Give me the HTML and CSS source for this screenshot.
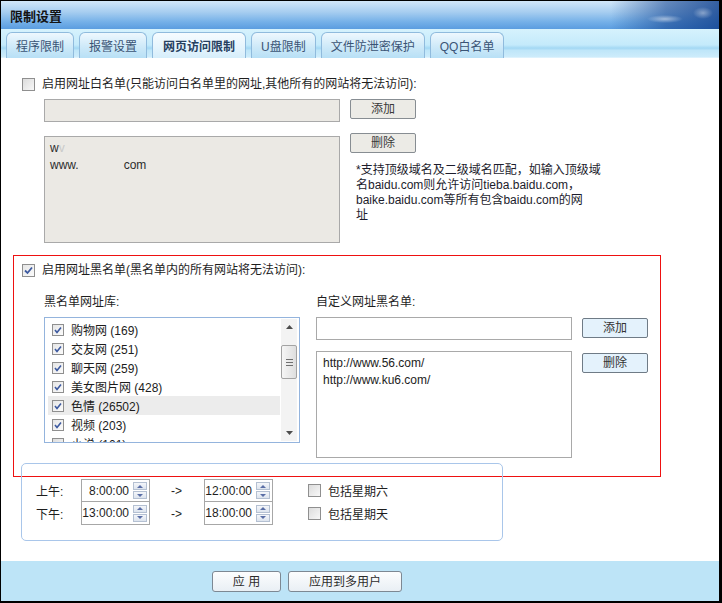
FILE: index.html
```html
<!DOCTYPE html>
<html lang="zh-CN">
<head>
  <meta charset="UTF-8">
  <title>限制设置</title>
  <link rel="stylesheet" href="styles.css">
</head>
<body>
  <div class="window">
    <div class="titlebar">
      <span class="title">限制设置</span>
    </div>

    <div class="tabstrip">
      <div class="tab">程序限制</div>
      <div class="tab">报警设置</div>
      <div class="tab active">网页访问限制</div>
      <div class="tab">U盘限制</div>
      <div class="tab">文件防泄密保护</div>
      <div class="tab">QQ白名单</div>
    </div>

    <div class="content">
      <div class="check-row white-head">
        <span class="cb"></span>
        <span>启用网址白名单(只能访问白名单里的网址,其他所有的网站将无法访问):</span>
      </div>

      <div class="whitelist">
        <div class="wl-left">
          <div class="field disabled"></div>
          <div class="area wl-area disabled">
            <div class="blur-line">w<span class="faded">v</span></div>
            <div>www.<span class="gap"></span>com</div>
          </div>
        </div>
        <div class="wl-right">
          <button class="btn gray">添加</button>
          <button class="btn gray del">删除</button>
          <p class="note">*支持顶级域名及二级域名匹配，如输入顶级域<br>名baidu.com则允许访问tieba.baidu.com，<br>baike.baidu.com等所有包含baidu.com的网<br>址</p>
        </div>
      </div>

      <div class="blackbox">
        <div class="check-row">
          <span class="cb on"><svg width="11" height="11" viewBox="0 0 11 11"><path d="M2 5.5 L4.5 8 L9 2.5" fill="none" stroke="#3d5aa0" stroke-width="1.8"/></svg></span>
          <span>启用网址黑名单(黑名单内的所有网站将无法访问):</span>
        </div>

        <div class="bl-cols">
          <div class="bl-left">
            <div class="sub-label">黑名单网址库:</div>
            <div class="listbox">
              <div class="list-items">
                <div class="item"><span class="cb sm on"><svg width="10" height="10" viewBox="0 0 10 10"><path d="M2 5 L4 7.5 L8 2.5" fill="none" stroke="#3d5aa0" stroke-width="1.6"/></svg></span>购物网 (169)</div>
                <div class="item"><span class="cb sm on"><svg width="10" height="10" viewBox="0 0 10 10"><path d="M2 5 L4 7.5 L8 2.5" fill="none" stroke="#3d5aa0" stroke-width="1.6"/></svg></span>交友网 (251)</div>
                <div class="item"><span class="cb sm on"><svg width="10" height="10" viewBox="0 0 10 10"><path d="M2 5 L4 7.5 L8 2.5" fill="none" stroke="#3d5aa0" stroke-width="1.6"/></svg></span>聊天网 (259)</div>
                <div class="item"><span class="cb sm on"><svg width="10" height="10" viewBox="0 0 10 10"><path d="M2 5 L4 7.5 L8 2.5" fill="none" stroke="#3d5aa0" stroke-width="1.6"/></svg></span>美女图片网 (428)</div>
                <div class="item hover"><span class="cb sm on"><svg width="10" height="10" viewBox="0 0 10 10"><path d="M2 5 L4 7.5 L8 2.5" fill="none" stroke="#3d5aa0" stroke-width="1.6"/></svg></span>色情 (26502)</div>
                <div class="item"><span class="cb sm on"><svg width="10" height="10" viewBox="0 0 10 10"><path d="M2 5 L4 7.5 L8 2.5" fill="none" stroke="#3d5aa0" stroke-width="1.6"/></svg></span>视频 (203)</div>
                <div class="item"><span class="cb sm"></span>小说 (101)</div>
              </div>
              <div class="scrollbar">
                <div class="sb-arrow"><svg width="7" height="4" viewBox="0 0 7 4"><path d="M0 4 L3.5 0 L7 4 Z" fill="#4d4d4d"/></svg></div>
                <div class="sb-track">
                  <div class="sb-thumb"><span></span><span></span><span></span></div>
                </div>
                <div class="sb-arrow"><svg width="7" height="4" viewBox="0 0 7 4"><path d="M0 0 L3.5 4 L7 0 Z" fill="#4d4d4d"/></svg></div>
              </div>
            </div>
          </div>

          <div class="bl-right">
            <div class="sub-label">自定义网址黑名单:</div>
            <div class="bl-row">
              <div class="field"></div>
              <button class="btn blue">添加</button>
            </div>
            <div class="bl-row second">
              <div class="area bl-area">
                <div>http://www.56.com/</div>
                <div>http://www.ku6.com/</div>
              </div>
              <button class="btn blue">删除</button>
            </div>
          </div>
        </div>
      </div>

      <div class="timebox">
        <div class="time-row">
          <span class="t-label">上午:</span>
          <div class="spin"><span class="val">8:00:00</span><span class="spin-btns"><i class="up"></i><i class="down"></i></span></div>
          <span class="arrow">-&gt;</span>
          <div class="spin"><span class="val">12:00:00</span><span class="spin-btns"><i class="up"></i><i class="down"></i></span></div>
          <span class="cb day"></span><span>包括星期六</span>
        </div>
        <div class="time-row">
          <span class="t-label">下午:</span>
          <div class="spin"><span class="val">13:00:00</span><span class="spin-btns"><i class="up"></i><i class="down"></i></span></div>
          <span class="arrow">-&gt;</span>
          <div class="spin"><span class="val">18:00:00</span><span class="spin-btns"><i class="up"></i><i class="down"></i></span></div>
          <span class="cb day"></span><span>包括星期天</span>
        </div>
      </div>
    </div>

    <div class="footer">
      <button class="btn foot apply">应 用</button>
      <button class="btn foot multi">应用到多用户</button>
    </div>
  </div>
</body>
</html>
```

FILE: styles.css
```css
html, body {
  margin: 0;
  padding: 0;
}

body {
  width: 722px;
  height: 603px;
  background: #000;
  font-family: "Liberation Sans", "Noto Sans CJK SC", sans-serif;
  font-size: 12px;
  color: #1e1e1e;
  overflow: hidden;
}

.window {
  margin: 1px 3px 0 1px;
  width: 718px;
  height: 600px;
  background: #fff;
  display: flex;
  flex-direction: column;
}

/* title bar */
.titlebar {
  height: 28px;
  flex: none;
  display: flex;
  align-items: center;
  padding-left: 9px;
  background:
    radial-gradient(ellipse 18px 4px at 664px 18px, rgba(255,255,255,0.5), rgba(255,255,255,0)),
    radial-gradient(ellipse 10px 6px at 702px 12px, rgba(255,255,255,0.4), rgba(255,255,255,0)),
    linear-gradient(to right, rgba(14,62,140,0) 610px, rgba(14,62,140,0.55) 665px, rgba(14,62,140,0.8) 718px),
    linear-gradient(#d2e7f9, #a6cdf0 40%, #74b0e8 75%, #5b9de0 100%);
}

.title {
  font-weight: bold;
  font-size: 13px;
  color: #141414;
}

/* tabs */
.tabstrip {
  height: 29px;
  flex: none;
  display: flex;
  align-items: flex-end;
  gap: 5px;
  padding-left: 5px;
  box-sizing: border-box;
  background: linear-gradient(#d6f2fd 0, #c4eafb 55%, #a3d8f4 66%, #bfe6f9 74%, #cdecfb 96%, #e9f7fe 100%);
}

.tab {
  height: 26px;
  box-sizing: border-box;
  padding: 0 9px;
  display: flex;
  align-items: center;
  border: 1px solid #90bbdd;
  border-bottom: none;
  border-radius: 6px 6px 0 0;
  background: linear-gradient(#eef8fe, #cbe8f8 60%, #b8e0f6);
  color: #3a5475;
  font-size: 12px;
}

.tab.active {
  background: linear-gradient(#f6fcff, #e4f4fd 60%, #d6eefb);
  font-weight: bold;
  color: #26405f;
  padding: 0 10px;
}

/* content area */
.content {
  height: 503px;
  flex: none;
  box-sizing: border-box;
  padding-left: 21px;
}

.check-row {
  display: flex;
  align-items: center;
  gap: 7px;
  height: 16px;
  line-height: 16px;
}

.white-head {
  margin-top: 18px;
}

.cb {
  width: 13px;
  height: 13px;
  box-sizing: border-box;
  border: 1px solid #8f8f8f;
  background: linear-gradient(135deg, #dcdcdc, #f8f8f8);
  display: inline-flex;
  align-items: center;
  justify-content: center;
  flex: none;
}

.cb.on {
  background: linear-gradient(135deg, #e6e6e6, #fbfbfb);
}

.cb.sm {
  width: 12px;
  height: 12px;
}

/* whitelist */
.whitelist {
  display: flex;
  margin-top: 7px;
  padding-left: 22px;
}

.wl-left {
  width: 296px;
}

.field {
  height: 23px;
  box-sizing: border-box;
  border: 1px solid #a9a9a9;
  background: #fff;
}

.area {
  box-sizing: border-box;
  border: 1px solid #a9a9a9;
  background: #fff;
}

.field.disabled,
.area.disabled {
  background: #ebe9e4;
}

.wl-area {
  margin-top: 14px;
  height: 107px;
  padding: 3px 5px;
  line-height: 17px;
  color: #2c2c2c;
}

.wl-area .faded {
  color: #c9c9c9;
}

.wl-area .gap {
  display: inline-block;
  width: 45px;
}

.wl-right {
  margin-left: 10px;
  display: flex;
  flex-direction: column;
  align-items: flex-start;
}

.btn {
  font-family: "Liberation Sans", "Noto Sans CJK SC", sans-serif;
  font-size: 12px;
  width: 66px;
  height: 20px;
  padding: 0;
  box-sizing: border-box;
  border-radius: 2px;
  line-height: 18px;
  cursor: default;
}

.btn.gray {
  border: 1px solid #878d92;
  background: #ecebe6;
  color: #3a3a3a;
}

.btn.del {
  margin-top: 14px;
}

.note {
  margin: 10px 0 0 6px;
  line-height: 15px;
  color: #1c1c2c;
}

/* blacklist */
.blackbox {
  margin: 12px 0 0 -9px;
  width: 648px;
  height: 222px;
  box-sizing: border-box;
  border: 1px solid #ee1111;
  padding: 6px 0 0 8px;
}

.bl-cols {
  display: flex;
  gap: 16px;
  padding-left: 22px;
  margin-top: 16px;
}

.sub-label {
  height: 16px;
  line-height: 16px;
  margin-bottom: 7px;
}

.listbox {
  width: 256px;
  height: 126px;
  box-sizing: border-box;
  border: 1px solid #94b4dd;
  display: flex;
  overflow: hidden;
}

.list-items {
  flex: 1;
  padding: 2px 0 0 3px;
  overflow: hidden;
}

.item {
  height: 19px;
  display: flex;
  align-items: center;
  gap: 7px;
  padding-left: 4px;
  color: #1c1c1c;
}

.item.hover {
  background: #ececec;
}

.scrollbar {
  width: 16px;
  margin: 1px 2px 1px 1px;
  display: flex;
  flex-direction: column;
  background: #f3f3f3;
}

.sb-arrow {
  height: 16px;
  display: flex;
  align-items: center;
  justify-content: center;
  flex: none;
}

.sb-track {
  flex: 1;
  padding-top: 10px;
}

.sb-thumb {
  height: 34px;
  box-sizing: border-box;
  border: 1px solid #a3a3a3;
  border-radius: 2px;
  background: linear-gradient(to right, #f6f6f6, #dedede);
  display: flex;
  flex-direction: column;
  justify-content: center;
  align-items: center;
  gap: 2px;
}

.sb-thumb span {
  width: 7px;
  height: 1px;
  background: #6f6f6f;
}

.bl-right {
  width: 332px;
}

.bl-row {
  display: flex;
  align-items: flex-start;
}

.bl-row .field {
  width: 256px;
}

.bl-row.second {
  margin-top: 11px;
}

.btn.blue {
  margin: 1px 0 0 10px;
  border: 1px solid #6f7b86;
  background: #e4f2fc;
  color: #333;
}

.bl-row.second .btn.blue {
  margin-top: 2px;
}

.bl-area {
  width: 256px;
  height: 107px;
  padding: 3px 6px;
  line-height: 17px;
  color: #1c1c1c;
}

/* time range */
.timebox {
  margin: -14px 0 0 -1px;
  width: 482px;
  height: 78px;
  box-sizing: border-box;
  border: 1px solid #a9c6ea;
  border-radius: 5px;
  padding: 15px 0 0 14px;
}

.time-row {
  display: flex;
  align-items: center;
  height: 23px;
}

.t-label {
  width: 45px;
}

.spin {
  width: 69px;
  height: 23px;
  box-sizing: border-box;
  border: 1px solid #a7a7a7;
  display: flex;
  align-items: center;
  justify-content: flex-end;
  padding-right: 2px;
  background: #fff;
}

.time-row + .time-row .spin {
  border-top: none;
}

.val {
  margin-right: 4px;
}

.spin-btns {
  display: flex;
  flex-direction: column;
  gap: 1px;
}

.spin-btns i {
  width: 14px;
  height: 8px;
  box-sizing: border-box;
  border: 1px solid #b4c0d2;
  background: linear-gradient(#f4f6fa, #dde4ee);
  display: flex;
  align-items: center;
  justify-content: center;
}

.spin-btns i::after {
  content: "";
  border-left: 3px solid transparent;
  border-right: 3px solid transparent;
}

.spin-btns i.up::after {
  border-bottom: 3px solid #5a6ea6;
}

.spin-btns i.down::after {
  border-top: 3px solid #5a6ea6;
}

.arrow {
  width: 54px;
  padding-left: 21px;
  box-sizing: border-box;
}

.cb.day {
  margin: 0 7px 0 35px;
}

/* footer */
.footer {
  height: 40px;
  flex: none;
  box-sizing: border-box;
  background: #bde4f7;
  padding: 10px 0 0 211px;
  display: flex;
  align-items: flex-start;
  gap: 7px;
}

.btn.foot {
  height: 21px;
  border: 1px solid #7d8893;
  border-radius: 3px;
  background: linear-gradient(#fcfdfe, #e9eff4);
  color: #2c2c2c;
}

.btn.apply {
  width: 69px;
}

.btn.multi {
  width: 114px;
}
```
